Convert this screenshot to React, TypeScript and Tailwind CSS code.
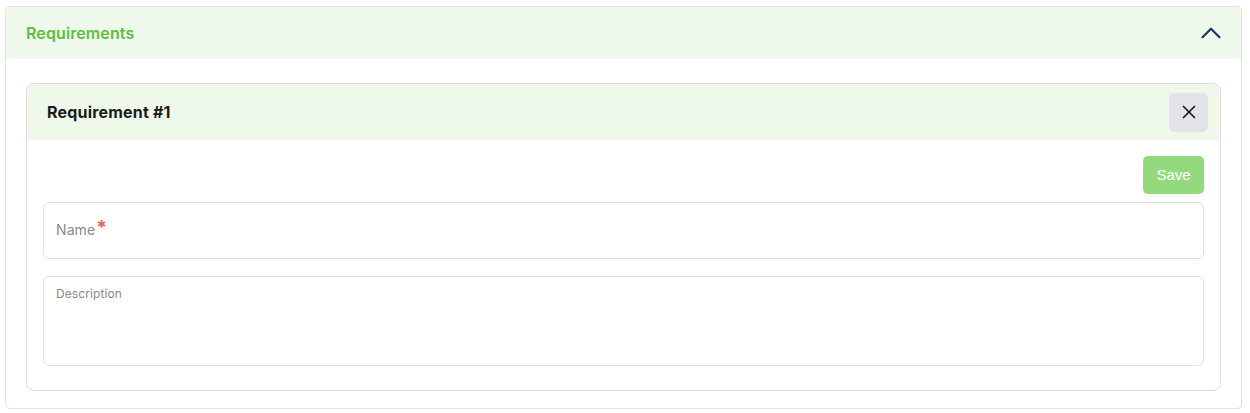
import { X, ChevronUp } from "lucide-react";

export default function App() {
  return (
    <div className="min-h-[413px] bg-white pt-[6px] pl-[5px]" style={{ fontFamily: "Inter, 'Noto Sans', sans-serif" }}>
      <div className="w-[1237px] overflow-hidden rounded-[5px] border border-[#e2e2e2]">
        <div className="flex h-[52px] items-center justify-between bg-[#eef8eb] pl-[20px] pr-[13px]">
          <span className="text-[16px] font-semibold tracking-[0.1px] text-[#5cbf3f]">Requirements</span>
          <ChevronUp className="h-[34px] w-[34px] text-[#1e3a6a]" strokeWidth={1.6} absoluteStrokeWidth />
        </div>
        <div className="px-[20px] pt-[24px] pb-[17px]">
          <div className="overflow-hidden rounded-[8px] border border-[#dedede]">
            <div className="flex h-[56px] items-center justify-between bg-[#eef8eb] pl-[20px] pr-[12px]">
              <span className="text-[16px] font-bold tracking-[0.2px] text-[#1a1a1a]">Requirement #1</span>
              <button className="flex h-[39px] w-[39px] items-center justify-center rounded-[6px] bg-[#e1e3e8]">
                <X className="h-[22px] w-[22px] text-[#1a1a1a]" strokeWidth={1.8} absoluteStrokeWidth />
              </button>
            </div>
            <div className="flex flex-col px-[16px] pt-[16px] pb-[24px]">
              <div className="flex justify-end">
                <button
                  className="h-[38px] w-[61px] rounded-[5px] bg-[#95d97f] text-[15px] text-white"
                  style={{ fontFamily: "'Liberation Sans', Arial, sans-serif" }}
                >
                  Save
                </button>
              </div>
              <div className="mt-[8px] flex h-[57px] items-center rounded-[6px] border border-[#e0e0e0] px-[12px]">
                <span className="-mt-[2px] text-[14px] tracking-[0.1px] text-[#8a8a8a]">Name</span>
                <span className="-mt-[7px] ml-[1px] text-[19px] leading-none font-bold text-[#f35b5b]">*</span>
              </div>
              <div className="mt-[17px] h-[90px] rounded-[6px] border border-[#e0e0e0] px-[12px] pt-[3px]">
                <span className="text-[12px] tracking-[0.1px] text-[#8a8a8a]">Description</span>
              </div>
            </div>
          </div>
        </div>
      </div>
    </div>
  );
}
